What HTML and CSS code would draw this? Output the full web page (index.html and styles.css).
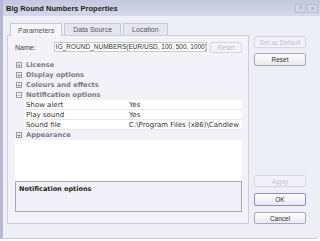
FILE: index.html
```html
<!DOCTYPE html>
<html lang="en">
<head>
    <meta charset="UTF-8">
    <title>Big Round Numbers Properties</title>
    <link rel="stylesheet" href="styles.css">
</head>
<body>
    <div class="window">
        <div class="titlebar">
            <span class="title">Big Round Numbers Properties</span>
            <div class="caption-buttons">
                <span class="cap-btn">?</span>
                <span class="cap-btn">x</span>
            </div>
        </div>

        <div class="content">
            <div class="main">
                <div class="tabs">
                    <div class="tab active">Parameters</div>
                    <div class="tab">Data Source</div>
                    <div class="tab">Location</div>
                </div>

                <div class="panel">
                    <div class="name-row">
                        <span class="name-label">Name:</span>
                        <div class="name-input">IG_ROUND_NUMBERS(EUR/USD, 100, 500, 1000)</div>
                        <div class="btn small disabled">Reset</div>
                    </div>

                    <div class="grid">
                        <div class="cat"><span class="exp">+</span>License</div>
                        <div class="cat"><span class="exp">+</span>Display options</div>
                        <div class="cat"><span class="exp">+</span>Colours and effects</div>
                        <div class="cat"><span class="exp">&minus;</span>Notification options</div>
                        <div class="prop"><span class="prop-name">Show alert</span><span class="prop-value">Yes</span></div>
                        <div class="prop"><span class="prop-name">Play sound</span><span class="prop-value">Yes</span></div>
                        <div class="prop"><span class="prop-name">Sound file</span><span class="prop-value">C:\Program Files (x86)\Candlew</span></div>
                        <div class="cat"><span class="exp">+</span>Appearance</div>
                        <div class="grid-empty"></div>
                    </div>

                    <div class="description">Notification options</div>
                </div>
            </div>

            <div class="side">
                <div class="btn disabled">Set as Default</div>
                <div class="btn reset">Reset</div>
                <div class="btn disabled apply">Apply</div>
                <div class="btn default">OK</div>
                <div class="btn">Cancel</div>
            </div>
        </div>
    </div>
</body>
</html>
```

FILE: styles.css
```css
* {
    margin: 0;
    padding: 0;
    box-sizing: border-box;
}

body {
    width: 320px;
    height: 241px;
    background: #ffffff;
    font-family: "Liberation Sans", Arial, sans-serif;
    font-size: 7px;
    color: #333;
    overflow: hidden;
}

.window {
    width: 320px;
    height: 239px;
    background: #eeeef6;
    border-left: 3px solid #b4b8d0;
    border-bottom: 1px solid #c8c8d8;
    border-bottom-right-radius: 6px;
    display: flex;
    flex-direction: column;
}

.titlebar {
    height: 16px;
    background: linear-gradient(#c4c7de, #d6d8ea);
    display: flex;
    justify-content: space-between;
    align-items: center;
    padding: 0 2px 0 3px;
}

.title {
    font-weight: bold;
    font-size: 7.5px;
    color: #222;
}

.caption-buttons {
    display: flex;
    gap: 1px;
}

.cap-btn {
    width: 11px;
    height: 9px;
    border: 1px solid #b8bbd2;
    background: #d4d6e8;
    color: #8a8ca8;
    font-size: 6px;
    display: flex;
    align-items: center;
    justify-content: center;
}

.content {
    flex: 1;
    display: flex;
    padding: 6px 0 14px 4px;
}

.main {
    width: 242px;
    display: flex;
    flex-direction: column;
}

.tabs {
    display: flex;
    padding-left: 3px;
    height: 13px;
    align-items: flex-end;
}

.tab {
    height: 12px;
    border: 1px solid #c8c8d6;
    border-bottom: none;
    background: #e6e6ef;
    color: #555;
    padding: 0 8px;
    display: flex;
    align-items: center;
    margin-right: 2px;
}

.tab.active {
    height: 13px;
    background: #f4f4f9;
    padding: 0 7px;
    margin-bottom: -1px;
    position: relative;
}

.panel {
    flex: 1;
    background: #f2f2f8;
    border: 1px solid #cfcfdc;
    padding: 6px 6px 11px 7px;
    display: flex;
    flex-direction: column;
}

.name-row {
    display: flex;
    align-items: center;
    height: 10px;
    margin-bottom: 8px;
}

.name-label {
    width: 39px;
    color: #444;
}

.name-input {
    width: 154px;
    height: 10px;
    background: #fff;
    border: 1px solid #c8c8d4;
    padding-left: 1px;
    font-size: 6.5px;
    white-space: nowrap;
    overflow: hidden;
    line-height: 8px;
    color: #333;
}

.btn {
    height: 12px;
    border: 1px solid #a8a8bc;
    border-radius: 2px;
    background: linear-gradient(#ffffff, #e8e8f0);
    color: #333;
    font-size: 6.5px;
    display: flex;
    align-items: center;
    justify-content: center;
}

.btn.small {
    width: 32px;
    height: 11px;
    margin-left: 3px;
}

.btn.disabled {
    border-color: #d6d6e0;
    color: #c2c2cc;
    background: #f2f2f8;
}

.btn.default {
    border-color: #8c8cc8;
    height: 13px;
}

.grid {
    display: flex;
    flex-direction: column;
    font-family: "DejaVu Sans", Verdana, sans-serif;
    font-size: 7px;
}

.cat {
    height: 10px;
    display: flex;
    align-items: center;
    color: #7c7c8c;
    font-weight: bold;
    font-size: 6.7px;
}

.exp {
    width: 6px;
    height: 6px;
    border: 1px solid #9898a8;
    background: #fff;
    color: #555;
    font-size: 6px;
    font-weight: normal;
    line-height: 4px;
    display: flex;
    align-items: center;
    justify-content: center;
    margin: 0 4px 0 1px;
}

.prop {
    height: 10px;
    margin-left: 9px;
    background: #fff;
    border-bottom: 1px solid #e6e6ee;
    display: flex;
    align-items: center;
    color: #333;
}

.prop-name {
    width: 105px;
    padding-left: 2px;
}

.prop-value {
    white-space: nowrap;
    overflow: hidden;
}

.grid-empty {
    height: 41px;
    background: #fff;
}

.description {
    height: 31px;
    border: 1px solid #a8a8b4;
    background: #f0f0f6;
    padding: 3px 3px;
    font-family: "DejaVu Sans", Tahoma, sans-serif;
    font-weight: bold;
    font-size: 6.5px;
    color: #222;
}

.side {
    width: 52px;
    margin-left: 5px;
    padding-top: 14px;
    display: flex;
    flex-direction: column;
}

.side .btn {
    margin-bottom: 6px;
}

.side .btn:last-child {
    margin-bottom: 0;
}

.btn.reset {
    height: 13px;
    margin-top: -1px;
}

.btn.apply {
    margin-top: auto;
}
```
